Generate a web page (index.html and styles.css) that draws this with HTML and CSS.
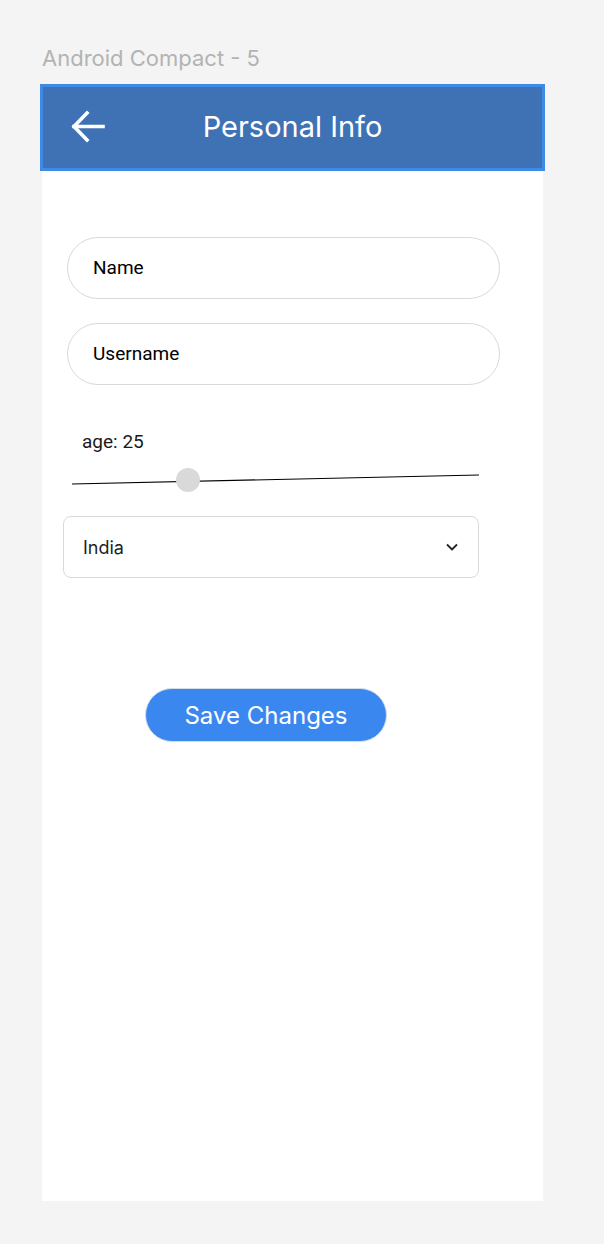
FILE: index.html
```html
<!DOCTYPE html>
<html lang="en">
<head>
<meta charset="utf-8">
<title>Personal Info</title>
<link rel="stylesheet" href="styles.css">
</head>
<body>
<div class="canvas">
  <div class="frame-label">Android Compact - 5</div>
  <div class="frame">
    <header class="appbar">
      <button class="back" aria-label="Back">
        <svg width="36" height="36" viewBox="0 0 36 36" fill="none" stroke="#fff" stroke-width="3.6" stroke-linecap="square">
          <path d="M5 17.5 H34"/>
          <path d="M18 4 L5 17.5 L18 31"/>
        </svg>
      </button>
      <h1 class="title">Personal Info</h1>
    </header>
    <main class="form">
      <div class="field">Name</div>
      <div class="field field-second">Username</div>
      <div class="age">age: 25</div>
      <div class="slider">
        <svg width="440" height="40" viewBox="0 0 440 40">
          <line x1="10" y1="22" x2="417" y2="13" stroke="#000" stroke-width="1.2"/>
          <circle cx="126" cy="18" r="12" fill="#d9d9d9"/>
        </svg>
      </div>
      <div class="select">
        <span>India</span>
        <svg width="14" height="10" viewBox="0 0 14 10" fill="none" stroke="#222" stroke-width="1.8">
          <path d="M2 2.5 L7 7.5 L12 2.5"/>
        </svg>
      </div>
      <button class="save">Save Changes</button>
    </main>
  </div>
</div>
</body>
</html>
```

FILE: styles.css
```css
html, body {
  margin: 0;
  padding: 0;
  background: #f4f4f4;
}

.canvas {
  width: 604px;
  height: 1244px;
  padding-left: 42px;
  box-sizing: border-box;
  font-family: Inter, "Liberation Sans", sans-serif;
}

.frame-label {
  padding-top: 44px;
  height: 40px;
  font-size: 22px;
  line-height: 28px;
  color: #b3b3b3;
}

.frame {
  width: 501px;
  height: 1117px;
  background: #fff;
  display: flex;
  flex-direction: column;
}

.appbar {
  margin: 0 -2px;
  height: 87px;
  box-sizing: border-box;
  border: 3px solid #3d8be6;
  background: #3f72b4;
  position: relative;
  display: flex;
  align-items: center;
  justify-content: center;
}

.back {
  position: absolute;
  left: 26px;
  top: 22px;
  padding: 0;
  border: 0;
  background: none;
  width: 36px;
  height: 36px;
  display: block;
}

.back svg { display: block; }

.title {
  margin: 0 0 2px 0;
  font-weight: 400;
  font-size: 29px;
  line-height: 34px;
  color: #fff;
}

.form {
  display: flex;
  flex-direction: column;
  align-items: flex-start;
  padding-top: 66px;
}

.field {
  margin-left: 25px;
  width: 433px;
  height: 62px;
  box-sizing: border-box;
  border: 1px solid #d9d9d9;
  border-radius: 31px;
  padding-left: 25px;
  padding-bottom: 2px;
  display: flex;
  align-items: center;
  font-family: Roboto, "Liberation Sans", sans-serif;
  font-size: 19px;
  color: #000;
}

.field-second {
  margin-top: 24px;
}

.age {
  margin-top: 45px;
  margin-left: 40px;
  font-family: Roboto, "Liberation Sans", sans-serif;
  font-size: 19px;
  line-height: 24px;
  color: #1a1a1a;
}

.slider {
  margin-top: 8px;
  margin-left: 20px;
  height: 40px;
}

.slider svg { display: block; }

.select {
  margin-top: 14px;
  margin-left: 21px;
  width: 416px;
  height: 62px;
  box-sizing: border-box;
  border: 1px solid #d9d9d9;
  border-radius: 8px;
  padding: 0 19px 0 19px;
  display: flex;
  align-items: center;
  justify-content: space-between;
  font-size: 18px;
  color: #1e1e1e;
}

.select svg { display: block; }

.save {
  margin-top: 110px;
  margin-left: 103px;
  width: 242px;
  height: 54px;
  box-sizing: border-box;
  border: 1px solid #d5dde8;
  border-radius: 27px;
  background: #3b87f0;
  color: #fff;
  font-family: Inter, "Liberation Sans", sans-serif;
  font-size: 24px;
  padding: 0;
}
```
